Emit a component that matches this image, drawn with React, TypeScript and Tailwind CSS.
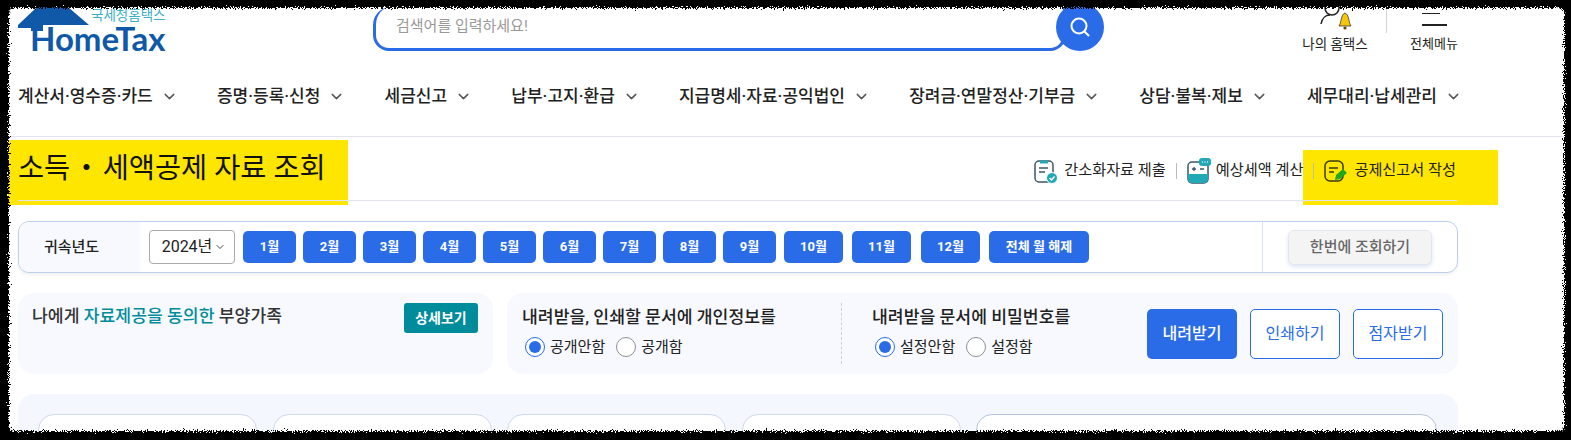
import React from "react";
import { ChevronDown } from "lucide-react";

const font = { fontFamily: '"Roboto", "Noto Sans CJK KR", "Noto Sans", sans-serif' };
const nav = ["계산서·영수증·카드", "증명·등록·신청", "세금신고", "납부·고지·환급", "지급명세·자료·공익법인", "장려금·연말정산·기부금", "상담·불복·제보", "세무대리·납세관리"];
const months: [string, string][] = [
  ["1월", "w-[53px]"], ["2월", "w-[53px]"], ["3월", "w-[53px]"], ["4월", "w-[53px]"], ["5월", "w-[53px]"], ["6월", "w-[53px]"], ["7월", "w-[53px]"], ["8월", "w-[53px]"], ["9월", "w-[53px]"],
  ["10월", "w-[59px] ml-[1px]"], ["11월", "w-[59px] ml-[2px]"], ["12월", "w-[59px] ml-[3px]"], ["전체 월 해제", "w-[100px] ml-[2px]"],
];

function Radio({ on, label }: { on?: boolean; label: string }) {
  return (
    <span className="flex items-center gap-[5px] text-[15px] leading-none text-[#222]">
      {on ? (
        <span className="flex h-[20px] w-[20px] items-center justify-center rounded-full border border-[#2a6ce8] bg-white">
          <span className="h-[12px] w-[12px] rounded-full bg-[#2a6ce8]" />
        </span>
      ) : (
        <span className="h-[20px] w-[20px] rounded-full border border-[#8f8f8f] bg-white" />
      )}
      {label}
    </span>
  );
}

function Logo() {
  return (
    <div className="relative h-[44px] w-[150px] shrink-0">
      <svg className="absolute left-0 top-0" width="150" height="44" viewBox="0 0 150 44">
        <path d="M0 18 L18 1 L18 0 L50 0 L71 18 L25 18 L25 24 L13 24 L13 21 L0 21 Z" fill="#1059a8" />
      </svg>
      <span className="absolute left-[12px] top-[19px] text-[33px] font-bold leading-[24px] text-[#1059a8]" style={{ fontFamily: '"Lato", sans-serif' }}>HomeTax</span>
      <span className="absolute left-[73px] top-[0px] text-[13.5px] leading-[16px] text-[#3cb0c8]">국세청홈택스</span>
    </div>
  );
}

export default function App() {
  return (
    <div className="relative h-[440px] w-[1571px] overflow-hidden bg-white pb-[8px] pl-[8px] pr-[7px] pt-[7px]" style={font}>
      <div className="relative h-full w-full bg-white">
        <div className="absolute left-0 top-[133px] h-[65px] w-[340px] bg-[#ffe600]" />
        <div className="absolute left-[1295px] top-[143px] h-[55px] w-[195px] bg-[#ffe600]" />

        <div className="relative flex flex-col pl-[10px]">
          <div className="flex h-[53px] w-[1439px]">
            <Logo />
            <div className="ml-[205px] flex h-[44px] w-[693px] shrink-0 items-center rounded-b-[16px] rounded-tl-[18px] border-[3px] border-t-0 border-[#2a6ce8] pb-[3px] pl-[20px] text-[15px] text-[#999]">검색어를 입력하세요!</div>
            <div className="-ml-[10px] mt-[-4px] flex h-[48px] w-[48px] shrink-0 items-center justify-center rounded-full bg-[#2a6ce8]">
              <svg width="24" height="24" viewBox="0 0 24 24" fill="none" stroke="#fff" strokeWidth="2"><circle cx="11" cy="11" r="7.5" /><path d="M16.5 16.5 L21 21" /></svg>
            </div>
            <div className="ml-[193px] flex w-[76px] shrink-0 flex-col items-center">
              <svg width="38" height="26" viewBox="0 0 38 26" className="-mt-[1px]">
                <circle cx="16" cy="2" r="7" fill="none" stroke="#222" strokeWidth="1.5" />
                <path d="M5 18 C6 12 10 9 14 9" fill="none" stroke="#222" strokeWidth="1.5" />
                <path d="M23 20 C25 18 25 8 29 7 C33 8 33 18 35 20 Z" fill="#f5c60d" stroke="#222" strokeWidth="0.7" />
                <circle cx="29" cy="22" r="1.6" fill="#5c4b08" />
              </svg>
              <span className="mt-[4px] whitespace-nowrap text-[13.5px] leading-[16px] text-[#222]">나의 홈택스</span>
            </div>
            <div className="ml-[13px] h-[26px] w-px shrink-0 bg-[#d4d4d4]" />
            <div className="ml-[17px] flex w-[60px] shrink-0 flex-col items-center">
              <div className="flex h-[29px] w-[25px] flex-col">
                <div className="mt-[6px] h-[1px] w-[18px] bg-[#222]" />
                <div className="mt-[10px] h-[2px] w-[25px] bg-[#222]" />
              </div>
              <span className="whitespace-nowrap text-[13px] leading-[16px] text-[#222]">전체메뉴</span>
            </div>
          </div>

          <div className="flex h-[76px] w-[1444px] items-center justify-between pb-[3px]">
            {nav.map((n) => (
              <span key={n} className="flex items-center gap-[8px] text-[17px] font-medium text-[#222]">
                {n}
                <ChevronDown size={17} strokeWidth={2} className="text-[#555]" />
              </span>
            ))}
          </div>
        </div>

        <div className="border-t border-[#e2e4f0]">
          <div className="relative ml-[10px] flex h-[64px] w-[1439px] items-center justify-between border-b border-[#e2e4f0]">
            <span className="mt-[1px] text-[28.4px] leading-none text-[#111]">소득<span className="px-[2px]">・</span>세액공제 자료 조회</span>
            <div className="mt-[4px] flex items-center text-[15.2px] text-[#222]">
              <svg width="24" height="26" viewBox="0 0 24 26" fill="none"><rect x="1" y="3" width="18" height="21" rx="4" stroke="#3d5566" strokeWidth="1.5" /><path d="M6 2.5h8v3H6z" fill="#22a9b5" /><path d="M5 10h9M5 14h6" stroke="#3d5566" strokeWidth="1.5" /><circle cx="18" cy="20" r="5.5" fill="#22a9b5" stroke="#fff" /><path d="M15.5 20l2 2 3-3.5" stroke="#fff" strokeWidth="1.4" /></svg>
              <span className="ml-[6px]">간소화자료 제출</span>
              <span className="mx-[10px] h-[16px] w-px bg-[#bbb]" />
              <svg width="24" height="26" viewBox="0 0 24 26" fill="none"><rect x="1" y="4" width="20" height="21" rx="4" stroke="#3d5566" strokeWidth="1.5" /><path d="M1 16h20v5a4 4 0 0 1-4 4H5a4 4 0 0 1-4-4z" fill="#22a9b5" /><path d="M5 11h4M7 9v4M13 11h4" stroke="#3d5566" strokeWidth="1.3" /><rect x="12" y="0" width="12" height="8" rx="3" fill="#22a9b5" /><path d="M15 4h.8M17.6 4h.8M20.2 4h.8" stroke="#fff" strokeWidth="1.3" /></svg>
              <span className="ml-[5px]">예상세액 계산</span>
              <span className="mx-[10px] h-[16px] w-px bg-[#bbb]" />
              <svg width="24" height="24" viewBox="0 0 24 24" fill="none"><rect x="1" y="2" width="18" height="20" rx="5" stroke="#3a3a10" strokeWidth="1.5" /><path d="M5 9h9M5 13h5" stroke="#3a3a10" strokeWidth="1.5" /><path d="M11 21l1-5 7-6 4 4-7 6z" fill="#22a81e" /></svg>
              <span className="ml-[6px] mr-[1px]">공제신고서 작성</span>
            </div>
          </div>

          <div className="relative ml-[10px] mt-[20px] flex h-[52px] w-[1440px] items-center overflow-hidden rounded-[11px] border border-[#bcd0ee] bg-white shadow-[0_2px_3px_#f2f2f2]">
            <div className="flex h-full w-[121px] shrink-0 items-center justify-center bg-[#f7f9fe] pr-[16px] text-[15px] font-medium text-[#222]">귀속년도</div>
            <div className="ml-[9px] flex h-[34px] w-[86px] shrink-0 items-center justify-center rounded-[4px] border border-[#aaa] pl-[4px] text-[16px] text-[#222]">
              2024년<ChevronDown size={12} className="ml-[2px] text-[#444]" />
            </div>
            <div className="ml-[8px] flex gap-[7px]">
              {months.map(([m, w]) => (
                <span key={m} className={`flex h-[32px] shrink-0 ${w} items-center justify-center rounded-[5px] bg-[#2a6ce8] text-[13px] font-bold text-white`}>{m}</span>
              ))}
            </div>
            <div className="ml-[173px] flex h-full items-center border-l border-[#d8e2f4] pl-[25px]">
              <span className="flex h-[35px] w-[144px] items-center justify-center rounded-[6px] border border-[#e3e6ef] bg-[#f4f4f5] text-[15px] font-medium text-[#666] shadow-[0_2px_4px_#dde5f6]">한번에 조회하기</span>
            </div>
          </div>

          <div className="ml-[10px] mt-[20px] flex w-[1440px] gap-[14px]">
            <div className="flex h-[81px] w-[475px] items-start justify-between rounded-[16px] bg-[#f7f9fe] pl-[14px] pr-[15px] pt-[10px]">
              <span className="pt-[1px] text-[17.2px] font-medium text-[#333]">나에게 <span className="text-[#008c9b]">자료제공을 동의한</span> 부양가족</span>
              <span className="flex h-[30px] w-[74px] items-center justify-center rounded-[3px] bg-[#008c9b] text-[14px] font-bold text-white">상세보기</span>
            </div>
            <div className="flex h-[81px] w-[951px] items-center rounded-[16px] bg-[#f7f9fe] pl-[15px] pr-[15px]">
              <div className="flex h-[61px] w-[320px] shrink-0 flex-col gap-[8px] border-r border-dashed border-[#c4d0e8]">
                <span className="pt-[2px] text-[17.2px] font-medium leading-[24px] text-[#222]">내려받을, 인쇄할 문서에 개인정보를</span>
                <div className="flex gap-[11px] pl-[3px]"><Radio on label="공개안함" /><Radio label="공개함" /></div>
              </div>
              <div className="ml-[30px] flex h-[61px] flex-1 flex-col gap-[8px]">
                <span className="pt-[2px] text-[17.2px] font-medium leading-[24px] text-[#222]">내려받을 문서에 비밀번호를</span>
                <div className="flex gap-[11px] pl-[3px]"><Radio on label="설정안함" /><Radio label="설정함" /></div>
              </div>
              <div className="flex gap-[13px]">
                <span className="flex h-[50px] w-[90px] items-center justify-center rounded-[5px] bg-[#2a6ce8] text-[16px] font-medium text-white">내려받기</span>
                <span className="flex h-[50px] w-[90px] items-center justify-center rounded-[5px] border border-[#2a6ce8] bg-white text-[16px] text-[#2a6ce8]">인쇄하기</span>
                <span className="flex h-[50px] w-[90px] items-center justify-center rounded-[5px] border border-[#2a6ce8] bg-white text-[16px] text-[#2a6ce8]">점자받기</span>
              </div>
            </div>
          </div>

          <div className="ml-[10px] mt-[20px] flex h-[60px] w-[1440px] gap-[15.5px] rounded-t-[16px] bg-[#f4f7fd] pl-[20px] pt-[20px]">
            <div className="h-[40px] w-[219px] rounded-t-[16px] border border-[#ccd9ee] bg-white" />
            <div className="h-[40px] w-[219px] rounded-t-[16px] border border-[#ccd9ee] bg-white" />
            <div className="h-[40px] w-[219px] rounded-t-[16px] border border-[#ccd9ee] bg-white" />
            <div className="h-[40px] w-[219px] rounded-t-[16px] border border-[#ccd9ee] bg-white" />
            <div className="h-[40px] w-[461px] rounded-t-[16px] border border-[#b4c4dc] bg-white" />
          </div>
        </div>
      </div>

      <svg className="pointer-events-none absolute left-0 top-0" width="1571" height="440" viewBox="0 0 1571 440">
        <defs>
          <filter id="torn" x="-5%" y="-5%" width="110%" height="110%">
            <feTurbulence type="fractalNoise" baseFrequency="0.9" numOctaves="2" seed="4" />
            <feDisplacementMap in="SourceGraphic" scale="9" xChannelSelector="R" yChannelSelector="G" />
          </filter>
        </defs>
        <path filter="url(#torn)" fillRule="evenodd" fill="#000" d="M-30 -30H1601V470H-30Z M14 8 H1558 Q1564 8 1564 14 V426 Q1564 431 1558 431 H14 Q9 431 9 426 V14 Q9 8 14 8Z" />
      </svg>
    </div>
  );
}
